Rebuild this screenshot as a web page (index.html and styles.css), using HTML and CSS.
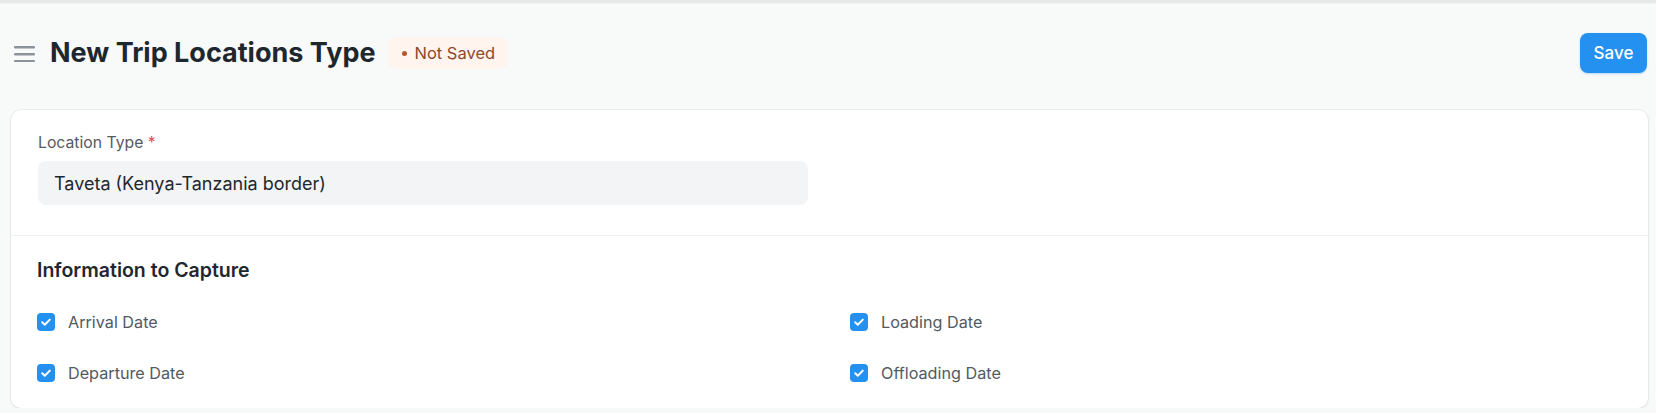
FILE: index.html
```html
<!DOCTYPE html>
<html lang="en">
<head>
<meta charset="utf-8">
<title>New Trip Locations Type</title>
<link rel="stylesheet" href="styles.css">
</head>
<body>
<div class="topline"></div>
<header class="page-head">
  <div class="title-group">
    <svg class="menu-icon" width="21" height="16" viewBox="0 0 21 16" aria-hidden="true">
      <rect x="0" y="0" width="21" height="2.4" rx="1.2"/>
      <rect x="0" y="7" width="21" height="2.4" rx="1.2"/>
      <rect x="0" y="14" width="21" height="2.4" rx="1.2"/>
    </svg>
    <h1 class="title">New Trip Locations Type</h1>
    <span class="pill"><span class="dot"></span>Not Saved</span>
  </div>
  <button class="btn-primary">Save</button>
</header>

<main class="card">
  <section class="section first">
    <div class="grid">
      <div class="field">
        <label class="label">Location Type <span class="req">*</span></label>
        <div class="input">Taveta (Kenya-Tanzania border)</div>
      </div>
      <div></div>
    </div>
  </section>
  <section class="section second">
    <h2 class="section-title">Information to Capture</h2>
    <div class="grid">
      <div class="col">
        <div class="check"><span class="box"><svg viewBox="0 0 18 18" width="18" height="18"><path d="M5.2 9.3 L7.8 11.8 L12.8 6.6"/></svg></span><span class="check-label">Arrival Date</span></div>
        <div class="check"><span class="box"><svg viewBox="0 0 18 18" width="18" height="18"><path d="M5.2 9.3 L7.8 11.8 L12.8 6.6"/></svg></span><span class="check-label">Departure Date</span></div>
      </div>
      <div class="col">
        <div class="check"><span class="box"><svg viewBox="0 0 18 18" width="18" height="18"><path d="M5.2 9.3 L7.8 11.8 L12.8 6.6"/></svg></span><span class="check-label">Loading Date</span></div>
        <div class="check"><span class="box"><svg viewBox="0 0 18 18" width="18" height="18"><path d="M5.2 9.3 L7.8 11.8 L12.8 6.6"/></svg></span><span class="check-label">Offloading Date</span></div>
      </div>
    </div>
  </section>
</main>
</body>
</html>
```

FILE: styles.css
```css
* { box-sizing: border-box; }

html, body {
  margin: 0;
  padding: 0;
  background: #f8f9f9;
  font-family: Inter, "Noto Sans", "Liberation Sans", sans-serif;
  color: #1f272e;
}

.topline {
  height: 3px;
  background: #e6e8ea;
  box-shadow: 0 1px 2px rgba(0, 0, 0, 0.04);
}

.page-head {
  display: flex;
  align-items: center;
  justify-content: space-between;
  padding: 30px 9px 37px 14px;
}

.title-group {
  display: flex;
  align-items: center;
  height: 40px;
}

.menu-icon {
  fill: #8b939b;
  margin-right: 15px;
  margin-top: 2px;
}

.title {
  margin: 0;
  font-size: 27px;
  font-weight: 700;
  line-height: 40px;
  color: #1f272e;
}

.pill {
  display: inline-flex;
  align-items: center;
  height: 32px;
  margin-left: 12px;
  padding: 0 13px 0 14px;
  border-radius: 8px;
  background: #fff4ee;
  color: #8d4a2b;
  font-size: 16.5px;
  font-weight: 400;
}

.dot {
  width: 5px;
  height: 5px;
  border-radius: 50%;
  background: #b5582b;
  margin-right: 8px;
}

.btn-primary {
  width: 67px;
  height: 40px;
  border: none;
  border-radius: 8px;
  background: #2490ef;
  color: #ffffff;
  font-family: inherit;
  font-size: 17px;
  font-weight: 500;
  box-shadow: 0 1px 2px rgba(36, 144, 239, 0.3);
  cursor: pointer;
}

.card {
  margin: 0 8px 0 11px;
  background: #ffffff;
  border-radius: 10px;
  box-shadow: 0 0 0 1px rgba(0, 0, 0, 0.04), 0 1px 3px rgba(0, 0, 0, 0.07);
}

.section {
  padding: 0 26px;
}

.section.first {
  padding-top: 24px;
  padding-bottom: 30px;
}

.section.second {
  border-top: 1px solid #eeeff0;
  padding-top: 23px;
  padding-bottom: 26px;
}

.grid {
  display: grid;
  grid-template-columns: 1fr 1fr;
  column-gap: 41px;
}

.field {
  display: flex;
  flex-direction: column;
}

.label {
  font-size: 15.75px;
  line-height: 18px;
  color: #555b61;
  margin: 0 0 9px 1px;
}

.req {
  color: #e24c4c;
}

.input {
  height: 44px;
  margin-left: 1px;
  margin-right: 1px;
  background: #f3f4f5;
  border-radius: 8px;
  padding: 0 16px;
  display: flex;
  align-items: center;
  font-size: 18px;
  color: #1f272e;
}

.section-title {
  margin: 0 0 32px 0;
  font-size: 19.5px;
  line-height: 22px;
  font-weight: 600;
  color: #1f272e;
}

.col {
  display: flex;
  flex-direction: column;
  gap: 33px;
}

.check {
  display: flex;
  align-items: center;
  height: 18px;
}

.box {
  width: 18px;
  height: 18px;
  border-radius: 4px;
  background: #2490ef;
  display: inline-flex;
  margin-right: 13px;
  flex: none;
}

.box svg path {
  fill: none;
  stroke: #ffffff;
  stroke-width: 2;
  stroke-linecap: round;
  stroke-linejoin: round;
}

.check-label {
  font-size: 16.2px;
  color: #525a62;
}
```
